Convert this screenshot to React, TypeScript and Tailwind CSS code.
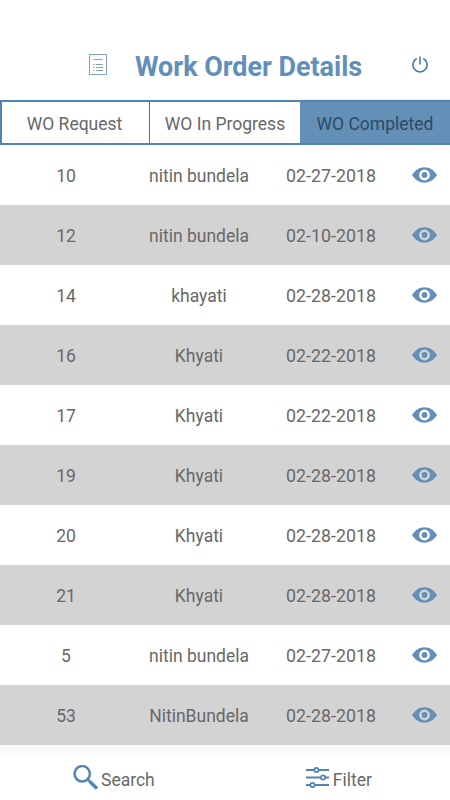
interface WorkOrder {
  id: number;
  name: string;
  date: string;
}

const orders: WorkOrder[] = [
  { id: 10, name: 'nitin bundela', date: '02-27-2018' },
  { id: 12, name: 'nitin bundela', date: '02-10-2018' },
  { id: 14, name: 'khayati', date: '02-28-2018' },
  { id: 16, name: 'Khyati', date: '02-22-2018' },
  { id: 17, name: 'Khyati', date: '02-22-2018' },
  { id: 19, name: 'Khyati', date: '02-28-2018' },
  { id: 20, name: 'Khyati', date: '02-28-2018' },
  { id: 21, name: 'Khyati', date: '02-28-2018' },
  { id: 5, name: 'nitin bundela', date: '02-27-2018' },
  { id: 53, name: 'NitinBundela', date: '02-28-2018' },
];

function ListIcon() {
  return (
    <svg className="h-[22px] w-[19px]" viewBox="0 0 19 22" fill="none" stroke="#7f9fbe">
      <path d="M.5.5h17v20H.5z" />
      <path d="M4.5 5.5h9" />
      <path d="M7 10.5h7M7 13.5h7M7 16.5h7" />
      <path d="M4 10.5h1.5M4 13.5h1.5M4 16.5h1.5" />
    </svg>
  );
}

function PowerIcon() {
  return (
    <svg className="h-[17px] w-4" viewBox="0 0 16 17" fill="none" stroke="#3f78a8" strokeWidth="1.5">
      <path d="M8 .5v8" />
      <path d="M4.7 2.5a7.1 7.1 0 1 0 6.6 0" />
    </svg>
  );
}

function EyeIcon() {
  return (
    <svg className="h-4 w-[25px]" viewBox="0 0 25 16">
      <path
        fill="#6490b7"
        fillRule="evenodd"
        d="M0 8C3.2 3 7.6.3 12.5.3S21.8 3 25 8c-3.2 5-7.6 7.7-12.5 7.7S3.2 13 0 8Zm12.5-5.4a5.4 5.4 0 1 0 0 10.8 5.4 5.4 0 0 0 0-10.8Z"
      />
      <circle cx="12.5" cy="8" r="2.9" fill="#6490b7" />
    </svg>
  );
}

function SearchIcon() {
  return (
    <svg className="h-[26px] w-[26px]" viewBox="0 0 26 26" fill="none" stroke="#5384b2">
      <circle cx="9.2" cy="8.8" r="7.7" strokeWidth="2.5" />
      <path d="m14.8 14.5 2.3 2.2" strokeWidth="2.5" />
      <path d="m16.7 16.5 7.3 7" strokeWidth="3.5" />
    </svg>
  );
}

function FilterIcon() {
  return (
    <svg className="h-[22px] w-[23px]" viewBox="0 0 23 22" fill="none" stroke="#5384b2" strokeWidth="1.8">
      <path d="M0 3h8.2m4.4 0H23M0 10.5h14.8m4.4 0H23M0 18h4.3m4.4 0H23" />
      <circle cx="10.4" cy="3" r="2.1" />
      <circle cx="17" cy="10.5" r="2.1" />
      <circle cx="6.5" cy="18" r="2.1" />
    </svg>
  );
}

export default function App() {
  return (
    <div className="flex h-[800px] w-[450px] flex-col overflow-hidden bg-white font-['Roboto',sans-serif] text-[17.5px] text-[#686868]">
      <header className="flex h-[99px] shrink-0 items-start pl-[89px] pr-[22px]">
        <div className="mt-[54px]">
          <ListIcon />
        </div>
        <h1 className="ml-[27px] mt-[51px] whitespace-nowrap text-[26.9px] font-bold leading-8 text-[#6090b9]">
          Work Order Details
        </h1>
        <button className="ml-auto mt-14">
          <PowerIcon />
        </button>
      </header>
      <div className="ml-[301px] h-px shrink-0 bg-[#ececec]" />

      <nav className="flex h-[45px] shrink-0 border-y-2 border-l-2 border-[#4f84b3]">
        <button className="w-[147px] pr-[2px] pt-[3px]">WO Request</button>
        <button className="w-[151px] border-l border-[#3f78a8] pt-[3px]">WO In Progress</button>
        <button className="flex-1 bg-[#6490b7] pt-[3px] text-[#2d4a63]">WO Completed</button>
      </nav>

      <main className="shrink-0">
        {orders.map((order) => (
          <div
            key={order.id}
            className="grid h-15 grid-cols-[132px_134px_130px_54px] items-center justify-items-center odd:bg-white even:bg-[#d3d3d3]"
          >
            <span className="pt-[2px]">{order.id}</span>
            <span className="pt-[2px]">{order.name}</span>
            <span className="pt-[2px] text-[17.8px]">{order.date}</span>
            <button className="pl-[2px]">
              <EyeIcon />
            </button>
          </div>
        ))}
      </main>
      <div className="h-[10px] shrink-0 bg-[#fafafa]" />

      <footer className="flex flex-1 items-start">
        <button className="flex items-start pl-[73px] pt-[10px]">
          <SearchIcon />
          <span className="ml-[2px] mt-[2px]">Search</span>
        </button>
        <button className="ml-[151px] flex items-start pt-3">
          <FilterIcon />
          <span className="ml-1">Filter</span>
        </button>
      </footer>
    </div>
  );
}
